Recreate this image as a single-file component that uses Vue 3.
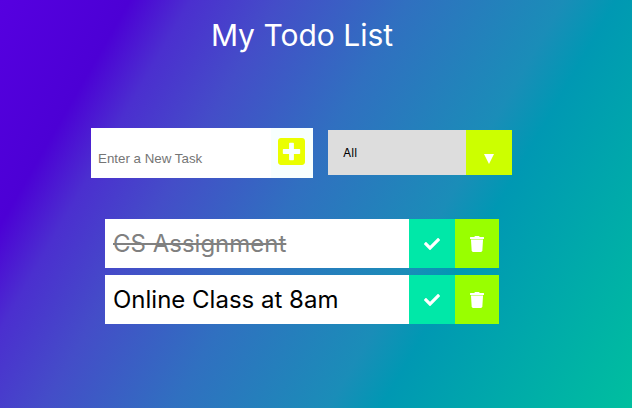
<script setup>
import { computed, ref } from 'vue'

const draft = ref('')
const filter = ref('all')
const todos = ref([
  { id: 1, text: 'CS Assignment', done: true },
  { id: 2, text: 'Online Class at 8am', done: false },
])

const visibleTodos = computed(() =>
  todos.value.filter((todo) => {
    if (filter.value === 'completed') return todo.done
    if (filter.value === 'uncompleted') return !todo.done
    return true
  }),
)

function addTodo() {
  const text = draft.value.trim()
  if (!text) return
  todos.value.push({ id: Date.now(), text, done: false })
  draft.value = ''
}

function removeTodo(id) {
  todos.value = todos.value.filter((todo) => todo.id !== id)
}
</script>

<template>
  <div class="page">
    <header class="header">
      <h1>My Todo List</h1>
    </header>

    <form class="controls" @submit.prevent="addTodo">
      <div class="entry">
        <input v-model="draft" type="text" placeholder="Enter a New Task" aria-label="New task" />
        <button type="submit" aria-label="Add task">
          <svg class="plus" viewBox="0 32 448 448" aria-hidden="true">
            <path d="M400 32H48C21.5 32 0 53.5 0 80v352c0 26.5 21.5 48 48 48h352c26.5 0 48-21.5 48-48V80c0-26.5-21.5-48-48-48zm-32 252c0 6.6-5.4 12-12 12h-92v92c0 6.6-5.4 12-12 12h-56c-6.6 0-12-5.4-12-12v-92H92c-6.6 0-12-5.4-12-12v-56c0-6.6 5.4-12 12-12h92v-92c0-6.6 5.4-12 12-12h56c6.6 0 12 5.4 12 12v92h92c6.6 0 12 5.4 12 12v56z" />
          </svg>
        </button>
      </div>
      <div class="filter">
        <select v-model="filter" aria-label="Show tasks">
          <option value="all">All</option>
          <option value="completed">Completed</option>
          <option value="uncompleted">Uncompleted</option>
        </select>
        <span class="arrow" aria-hidden="true">
          <svg viewBox="0 0 10 10"><path d="M0 0h10L5 10z" /></svg>
        </span>
      </div>
    </form>

    <ul class="todos">
      <li v-for="todo in visibleTodos" :key="todo.id" :class="{ done: todo.done }">
        <span class="text"><span>{{ todo.text }}</span></span>
        <button class="check" type="button" aria-label="Toggle complete" @click="todo.done = !todo.done">
          <svg viewBox="0 0 512 512" aria-hidden="true">
            <path d="M173.898 439.404l-166.4-166.4c-9.997-9.997-9.997-26.206 0-36.204l36.203-36.204c9.997-9.998 26.207-9.998 36.204 0L192 312.69 432.095 72.596c9.997-9.997 26.207-9.997 36.204 0l36.203 36.204c9.997 9.997 9.997 26.206 0 36.204l-294.4 294.401c-9.998 9.997-26.207 9.997-36.204-.001z" />
          </svg>
        </button>
        <button class="trash" type="button" aria-label="Delete task" @click="removeTodo(todo.id)">
          <svg viewBox="0 0 448 512" aria-hidden="true">
            <path d="M432 32H312l-9.4-18.7A24 24 0 0 0 281.1 0H166.8a23.72 23.72 0 0 0-21.4 13.3L136 32H16A16 16 0 0 0 0 48v32a16 16 0 0 0 16 16h416a16 16 0 0 0 16-16V48a16 16 0 0 0-16-16z" />
            <path class="lid-gap" d="M32 96h384v32H32z" />
            <path d="M53.2 467a48 48 0 0 0 47.9 45h245.8a48 48 0 0 0 47.9-45L416 128H32z" />
          </svg>
        </button>
      </li>
    </ul>
  </div>
</template>

<style>
body {
  margin: 0;
}
</style>

<style scoped>
.page {
  box-sizing: border-box;
  min-height: 100vh;
  padding: 12px 44px 16px 16px;
  background: linear-gradient(120deg, #5600e0 0%, #4c00d5 15%, #4b2fcf 22%, #444dc8 32%, #3070c0 47%, #1a8db8 65%, #0098b3 71%, #00bf9f 100%);
  font-family: Inter, "Open Sans", sans-serif;
}

.header {
  text-align: center;
}

h1 {
  margin: 0;
  color: #fff;
  font-size: 30px;
  font-weight: 400;
  line-height: 46px;
}

.controls {
  display: flex;
  align-items: flex-start;
  gap: 15px;
  max-width: 422px;
  margin: 70px auto 0;
}

.entry {
  display: flex;
  flex: 0 1 222px;
  height: 50px;
  min-width: 0;
}

.entry input {
  box-sizing: border-box;
  flex: 1;
  min-width: 0;
  padding: 10px 7px 0;
  border: 0;
  border-radius: 0;
  background: #fff;
  color: #000;
  font-family: "Liberation Sans", Arial, sans-serif;
}

.entry input::placeholder {
  color: #757575;
}

button {
  display: flex;
  align-items: center;
  justify-content: center;
  padding: 0;
  border: 0;
  cursor: pointer;
}

.entry button {
  width: 42px;
  padding: 0 2px 3px 0;
  background: #f7fffe;
}

.plus {
  width: 27px;
  height: 27px;
  fill: #eaff00;
}

.filter {
  position: relative;
  flex: 0 1 184px;
  height: 45px;
  min-width: 0;
  margin-top: 2px;
}

.filter select {
  width: 100%;
  height: 100%;
  padding: 0 46px 0 15px;
  appearance: none;
  border: 0;
  border-radius: 0;
  background: #ddd;
  color: #000;
  font-family: inherit;
  font-size: 12px;
}

.arrow {
  position: absolute;
  inset: 0 0 0 auto;
  display: flex;
  align-items: center;
  justify-content: center;
  width: 46px;
  padding-top: 12px;
  box-sizing: border-box;
  background: #cf0;
  pointer-events: none;
}

.arrow svg {
  width: 10px;
  height: 10px;
  fill: #fff;
}

.todos {
  display: grid;
  gap: 7px;
  max-width: 394px;
  margin: 41px auto 0;
  padding: 0;
  list-style: none;
}

.todos li {
  display: flex;
  min-height: 49px;
  background: #fff;
}

.text {
  display: flex;
  flex: 1;
  align-items: center;
  padding: 0 8px;
  color: #000;
  font-size: 24px;
  line-height: 36px;
}

.done .text {
  color: #808080;
}

.done .text span {
  text-decoration: line-through;
}

.check {
  width: 46px;
  background: #00e8a8;
}

.trash {
  width: 44px;
  background: #9f0;
}

.check svg,
.trash svg {
  height: 16px;
  fill: #fff;
}

.lid-gap {
  fill: #cf8;
}
</style>
